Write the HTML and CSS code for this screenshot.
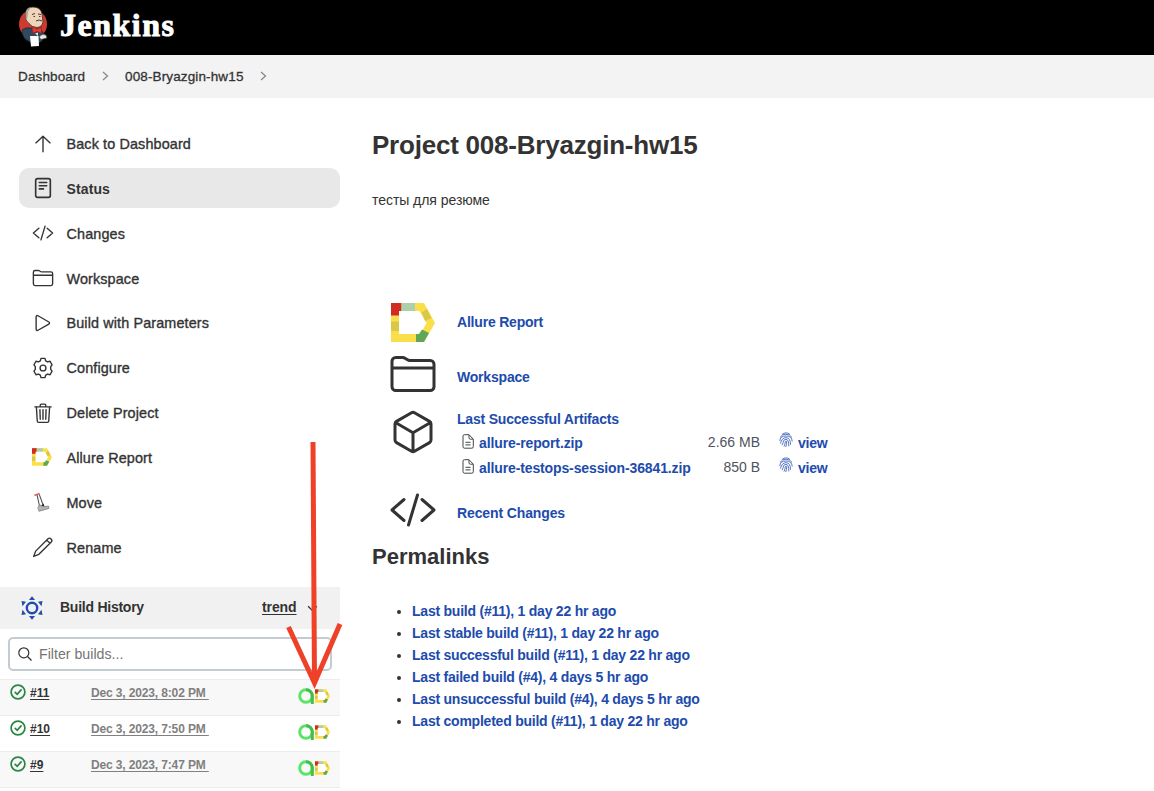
FILE: index.html
```html
<!DOCTYPE html>
<html lang="en">
<head>
<meta charset="utf-8">
<title>008-Bryazgin-hw15 [Jenkins]</title>
<link rel="stylesheet" href="styles.css">
</head>
<body>
<svg class="defs" width="0" height="0" aria-hidden="true">
  <symbol id="allure" viewBox="0 0 44 39">
    <path fill="#fbdf4a" d="M0 0h33l11 20-11 19H0z"/>
    <path fill="#d22b24" d="M0 0h10.500v12.500H0z"/>
    <path fill="#abd0aa" d="M10.500 0H24v8H10.500z"/>
    <path fill="#dbc746" d="M0 18.500h8V28H0z"/>
    <path fill="#fff" d="M8 8h20.500l7 12-6 11H8z"/>
    <path fill="#dbc746" d="M30.500 9.500l5.500-3.500 4.500 9-6.500 3z"/>
    <path fill="#60a657" d="M25 31h3l3-4.500 7 3.500-5 9h-8z"/>
  </symbol>
  <symbol id="folder" viewBox="0 0 512 512">
    <path d="M440 432H72a40 40 0 01-40-40V120a40 40 0 0140-40h75.890a40 40 0 0122.190 6.720l27.840 18.560a40 40 0 0022.190 6.720H440a40 40 0 0140 40v240a40 40 0 01-40 40zM32 192h448"/>
  </symbol>
  <symbol id="code" viewBox="0 0 512 512">
    <path d="M160 368L32 256l128-112M352 368l128-112-128-112M304 96l-96 320"/>
  </symbol>
  <symbol id="file" viewBox="0 0 12 15">
    <path d="M1 2.200Q1 .7 2.500.7H7l4.300 4.500v7.500q0 1.500-1.500 1.500H2.500Q1 14.200 1 12.700zM7 .8v3q0 1.400 1.400 1.400h2.800M3.500 8.300h5M3.500 10.900h5"/>
  </symbol>
  <symbol id="finger" viewBox="0 0 14 16">
    <path d="M3 2.500Q7-.8 11 2.500M1 5.500Q3 2.200 7 2.200t6 3.300M.8 9Q1 4 7 4t6.200 5.500M1.500 11.500Q2.800 5.700 7 5.700q4.500 0 4.500 7M3 13.200q1.500-3 1.500-4.200Q5 7.400 7 7.400q3 0 2.800 7M5 14.500Q6.300 12 6.300 9.500q.7-1 1.400 0 .2 3.200-1 5.500"/>
  </symbol>
  <symbol id="check" viewBox="0 0 16 16">
    <circle cx="8" cy="8" r="6.900"/><path d="M5.200 8.400l2 1.900 3.900-4.400"/>
  </symbol>
  <symbol id="testops" viewBox="0 0 17 16">
    <circle cx="8" cy="8" r="6.300" fill="none" stroke="#5de368" stroke-width="3"/>
    <path d="M8 1.700A6.300 6.300 0 0114.300 8v8" fill="none" stroke="#43bd4d" stroke-width="3"/>
  </symbol>
  <symbol id="chevron" viewBox="0 0 7 10"><path d="M1 1l4.500 4L1 9"/></symbol>
</svg>

<header class="header">
  <svg class="butler" viewBox="0 0 30 41">
    <ellipse cx="15" cy="18" rx="14" ry="14.500" fill="#cf3a30"/>
    <path d="M4 24q4-3 8-2l11 2 4 5q-1 5-6 8l-9-1Q4 33 4 24z" fill="#30495c" stroke="#182430" stroke-width=".7"/>
    <path d="M7.500 10Q6.500 1 15 1q8 0 9 7l1 8q-1 5-6 5.500-5 0-8-4-4-3-3.500-7.500z" fill="#eed5ba" stroke="#3a302b" stroke-width=".8"/>
    <path d="M7.500 8Q8 2 13 1.200L10 5.500l-.5 6L8 14z" fill="#a6a39e"/>
    <path d="M14 8.500l3-1M20 8l3 .500M15.500 10.500H17M21 10.500h1.500M18 15q3-2 6 0" fill="none" stroke="#493b35" stroke-width="1"/>
    <path d="M14 20.500l5 2.500 4.500-2v6.500l-4.500-2-4.500 2z" fill="#e03a32" stroke="#701c20" stroke-width=".6"/>
    <path d="M17 27.500l3-1v3.500z" fill="#dfe5e8"/>
    <path d="M12 30h8.500l.5 10-8 .500z" fill="#fff"/>
    <path d="M21 31q3-4 7-2l1 3-6 1.500z" fill="#f0e6dc" stroke="#26343e" stroke-width=".6"/>
  </svg>
  <span class="brand">Jenkins</span>
</header>

<nav class="crumbs">
  <span class="crumb-home">Dashboard</span><svg class="chevron"><use href="#chevron"/></svg>
  <span class="crumb-job">008-Bryazgin-hw15</span><svg class="chevron"><use href="#chevron"/></svg>
</nav>

<div class="page">
  <aside class="side">
    <ul class="tasks">
      <li class="task"><svg class="icon" viewBox="0 0 512 512"><path d="M90 230L256 74l166 156M256 84v354"/></svg><span>Back to Dashboard</span></li>
      <li class="task active"><svg class="icon" viewBox="0 0 24 24"><path class="bold-line" d="M6 1.700h12q2 0 2 2v16.600q0 2-2 2H6q-2 0-2-2V3.700q0-2 2-2zM8 6h8M8 9.500h8M8 13h4.500"/></svg><span>Status</span></li>
      <li class="task"><svg class="icon"><use href="#code"/></svg><span>Changes</span></li>
      <li class="task"><svg class="icon"><use href="#folder"/></svg><span>Workspace</span></li>
      <li class="task"><svg class="icon" viewBox="0 0 512 512"><path d="M96 112v288c0 26 24 36 43 25l253-145c20-12 20-36 0-48L139 87c-19-11-43-1-43 25z"/></svg><span>Build with Parameters</span></li>
      <li class="task"><svg class="icon" viewBox="0 0 24 24"><circle class="unit-line" cx="12" cy="12" r="3.200"/><path class="unit-line" d="M9.800 1.500h4.400l.8 2.800 1.900 1.100 2.800-.8 2.200 3.900-1.500 2v3l1.500 2-2.200 3.900-2.800-.8-1.900 1.100-.8 2.800H9.800L9 19.700l-1.900-1.100-2.800.8-2.200-3.900 1.500-2v-3l-1.500-2 2.200-3.900 2.800.8L9 4.300z"/></svg><span>Configure</span></li>
      <li class="task"><svg class="icon" viewBox="0 0 512 512"><path d="M102 112l20 330c1 18 14 32 32 32h204c18 0 31-14 32-32l20-330M66 112h380M192 112V72q0-24 24-24h80q24 0 24 24v40M256 176v224M184 176l8 224M328 176l-8 224"/></svg><span>Delete Project</span></li>
      <li class="task"><svg class="icon allure-small"><use href="#allure"/></svg><span>Allure Report</span></li>
      <li class="task"><svg class="icon" viewBox="0 0 24 24"><path d="M5.500 4l3 14M8 4l4 11" stroke="#555" stroke-width="1.200"/><path d="M6.500 18l2-3 3 2 6.500-.5.500 2.500-10.500 3z" fill="#b5b5b0" stroke="#777" stroke-width=".8"/><path d="M10 16l2.500-2.500 1 3z" fill="#222" stroke="none"/><path d="M3.500 4.500l4-1.500" stroke="#d76b6b" stroke-width="2"/></svg><span>Move</span></li>
      <li class="task"><svg class="icon" viewBox="0 0 24 24"><path class="unit-line" d="M1.800 22.300L4 16.500 17.500 3q1.600-1.500 3.300.2t.2 3.300L7.500 20zM16 4.500L19.500 8"/></svg><span>Rename</span></li>
    </ul>

    <section class="history">
      <div class="history-head">
        <svg class="sun" viewBox="0 0 24 24"><circle cx="12" cy="12" r="5.200"/><path d="M12 .3l3 3.700H9zM12 23.700l3-3.700H9zM1.500 5l4.500.7-3.500 4.500zM22.500 5l-4.500.7 3.500 4.500zM1.500 19l4.500-.7-3.500-4.500zM22.500 19l-4.500-.7 3.500-4.500z"/></svg>
        <span class="history-title">Build History</span>
        <a class="trend">trend</a>
        <svg class="caret" viewBox="0 0 12 8"><path d="M1 1.500l5 5 5-5"/></svg>
      </div>
      <div class="filter">
        <svg class="search" viewBox="0 0 14 14"><circle cx="5.800" cy="5.800" r="5"/><path d="M9.500 9.500l4 4"/></svg>
        <span>Filter builds...</span>
      </div>
      <div class="build"><svg class="check"><use href="#check"/></svg><a class="num">#11</a><a class="date">Dec 3, 2023, 8:02 PM&nbsp;</a><span class="badges"><svg class="ops"><use href="#testops"/></svg><svg class="mini"><use href="#allure"/></svg></span></div>
      <div class="build"><svg class="check"><use href="#check"/></svg><a class="num">#10</a><a class="date">Dec 3, 2023, 7:50 PM&nbsp;</a><span class="badges"><svg class="ops"><use href="#testops"/></svg><svg class="mini"><use href="#allure"/></svg></span></div>
      <div class="build"><svg class="check"><use href="#check"/></svg><a class="num">#9</a><a class="date">Dec 3, 2023, 7:47 PM&nbsp;</a><span class="badges"><svg class="ops"><use href="#testops"/></svg><svg class="mini"><use href="#allure"/></svg></span></div>
    </section>
  </aside>

  <main class="main">
    <h1>Project 008-Bryazgin-hw15</h1>
    <p class="desc">тесты для резюме</p>
    <div class="links">
      <div class="link-row report"><svg class="allure-big"><use href="#allure"/></svg><a>Allure Report</a></div>
      <div class="link-row space"><svg class="big"><use href="#folder"/></svg><a>Workspace</a></div>
      <div class="link-row artifacts">
        <svg class="big" viewBox="0 0 512 512"><path d="M448 341.400V170.600A32 32 0 00432 143L272 51.300a32 32 0 00-32 0L80 143a32 32 0 00-16 27.600v170.800A32 32 0 0080 369l160 91.700a32 32 0 0032 0L432 369a32 32 0 0016-27.600zM69 154l187 110 187-110M256 463V264"/></svg>
        <div class="artifact-list">
          <a class="artifact-title">Last Successful Artifacts</a>
          <div class="artifact"><svg class="file"><use href="#file"/></svg><a class="name">allure-report.zip</a><span class="size">2.66 MB</span><svg class="finger"><use href="#finger"/></svg><a>view</a></div>
          <div class="artifact"><svg class="file"><use href="#file"/></svg><a class="name">allure-testops-session-36841.zip</a><span class="size">850 B</span><svg class="finger"><use href="#finger"/></svg><a>view</a></div>
        </div>
      </div>
      <div class="link-row recent"><svg class="big"><use href="#code"/></svg><a>Recent Changes</a></div>
    </div>
    <h2>Permalinks</h2>
    <ul class="permalinks">
      <li><a>Last build (#11), 1 day 22 hr ago</a></li>
      <li><a>Last stable build (#11), 1 day 22 hr ago</a></li>
      <li><a>Last successful build (#11), 1 day 22 hr ago</a></li>
      <li><a>Last failed build (#4), 4 days 5 hr ago</a></li>
      <li><a>Last unsuccessful build (#4), 4 days 5 hr ago</a></li>
      <li><a>Last completed build (#11), 1 day 22 hr ago</a></li>
    </ul>
  </main>
</div>

<svg class="arrow" viewBox="0 0 60 250"><path d="M28 2l1.500 240M3.500 187l26 56 25.500-59"/></svg>
</body>
</html>
```

FILE: styles.css
```css
* { box-sizing: border-box; }
body {
  margin: 0;
  height: 791px;
  overflow: hidden;
  position: relative;
  background: #fff;
  color: #333;
  font: 14px/20px "Liberation Sans", Arial, sans-serif;
}
svg { display: block; flex: none; overflow: visible; }
.defs { position: absolute; }
ul { margin: 0; padding: 0; }

.header { height: 55px; background: #000; display: flex; padding: 6px 0 0 18px; }
.butler { width: 30px; height: 41px; }
.brand {
  margin-left: 12px;
  color: #fff;
  font: bold 32px/39px "Liberation Serif", "Times New Roman", serif;
  letter-spacing: 1.500px;
  -webkit-text-stroke: .9px #fff;
}

.crumbs {
  height: 43px;
  background: #f3f3f3;
  display: flex;
  align-items: center;
  padding-left: 18px;
  font-size: 13.500px;
  letter-spacing: .13px;
  -webkit-text-stroke: .3px #333;
}
.chevron { width: 7px; height: 10px; margin-top: -2px; fill: none; stroke: #888; stroke-width: 1.300; }
.crumb-home { width: 84px; white-space: nowrap; }
.crumb-job { width: 135px; margin-left: 16px; white-space: nowrap; }

.page { display: flex; }
.side { width: 340px; flex: none; padding-top: 25px; }
.tasks { list-style: none; padding-left: 19px; height: 464px; }
.task {
  height: 40px;
  margin-bottom: 4.850px;
  padding-left: 13px;
  display: flex;
  align-items: center;
  border-radius: 10px;
  font-size: 14.400px;
  letter-spacing: .12px;
  -webkit-text-stroke: .35px #333;
}
.task span { padding: 2px 0 0 12.500px; }
.active { background: #e8e8e8; font-weight: bold; font-size: 14px; -webkit-text-stroke: 0; }
.icon { width: 22px; height: 22px; margin-top: 1px; fill: none; stroke: #333; stroke-width: 32; stroke-linecap: round; stroke-linejoin: round; }
.unit-line { stroke-width: 1.500; }
.bold-line { stroke-width: 1.800; }
.icon.allure-small { width: 20px; height: 18px; margin-right: 2px; stroke: none; }

.history-head { height: 42px; background: #f1f1f1; display: flex; align-items: center; padding: 0 0 2px 20px; font-weight: bold; letter-spacing: -.25px; }
.sun { width: 24px; height: 24px; margin-top: 2px; fill: #204bb0; }
.sun circle { fill: none; stroke: #204bb0; stroke-width: 2.400; }
.history-title { margin-left: 16px; width: 202px; }
.trend, .num, .date { text-decoration: underline; text-underline-offset: 2px; }
.trend { width: 35px; letter-spacing: -.1px; }
.caret { width: 11px; height: 7px; margin: 2px 0 0 10px; fill: none; stroke: #333; stroke-width: 1.500; }
.filter {
  height: 34px;
  margin: 8px;
  width: 324px;
  border: 2px solid #c3ccd1;
  border-radius: 5px;
  display: flex;
  align-items: center;
  padding-left: 8px;
  color: #757575;
  font-size: 14.200px;
}
.search { width: 14px; height: 14px; margin-right: 7px; fill: none; stroke: #333; stroke-width: 1.200; }
.build { height: 36px; display: flex; padding: 4px 0 0 10px; border-top: 1px solid #ececec; font-size: 12px; line-height: 18px; font-weight: bold; }
.build:nth-child(odd) { background: #f8f8f8; }
.build:last-child { height: 37px; border-bottom: 1px solid #ececec; }
.check { width: 16px; height: 16px; fill: none; stroke: #298544; stroke-width: 1.700; stroke-linecap: round; }
.num { width: 65px; padding-left: 4px; }
.date { width: 207px; color: #808080; letter-spacing: -.14px; }
.badges { display: flex; padding-top: 4px; }
.ops { width: 17px; height: 16px; }
.mini { width: 15px; height: 14px; margin-top: 1px; }

.main { padding-left: 32px; }
h1 { margin: 31px 0 0; font-size: 26px; line-height: 32px; letter-spacing: -.22px; }
.desc { margin: 29px 0 0; font-size: 14px; height: 20px; letter-spacing: -.05px; }
.main a { color: #204bac; font-weight: bold; letter-spacing: -.2px; }
.link-row { display: flex; }
.links { padding: 90px 0 0 17px; }
.allure-big { width: 44px; height: 39px; margin: 3px 22.500px 0 1.500px; }
.big { width: 48px; height: 48px; margin-right: 20px; fill: none; stroke: #333; stroke-width: 32; stroke-linecap: round; stroke-linejoin: round; }
.report { height: 50px; }
.report a { padding-top: 12px; }
.space { height: 57px; }
.space a { padding-top: 17px; }
.artifacts { height: 79px; }
.artifacts .big { margin-top: 1px; }
.artifact-list { padding-top: 2px; }
.artifact-title { display: block; height: 22px; }
.artifact { display: flex; height: 25px; padding: 2px 0 0 5px; }
.file { width: 12px; height: 15px; margin-top: 1px; margin-right: 5px; fill: none; stroke: #444; stroke-width: 1; }
.main .name { width: 211px; white-space: nowrap; letter-spacing: -.12px; }
.size { width: 70px; text-align: right; color: #4d545d; margin-top: -1px; }
.finger { width: 14px; height: 16px; margin: -1px 5px 0 19px; fill: none; stroke: #385fb8; stroke-width: .85; }
.recent { height: 54px; }
.recent a { padding-top: 17px; letter-spacing: -.12px; }
h2 { margin: 2px 0 0; font-size: 22px; line-height: 30px; }
.permalinks { padding: 28px 0 0 40px; line-height: 22px; }
.main .permalinks a { letter-spacing: -.23px; }

.arrow { position: absolute; left: 285px; top: 440px; width: 60px; height: 250px; fill: none; stroke: #ee4128; stroke-width: 5; }
```
